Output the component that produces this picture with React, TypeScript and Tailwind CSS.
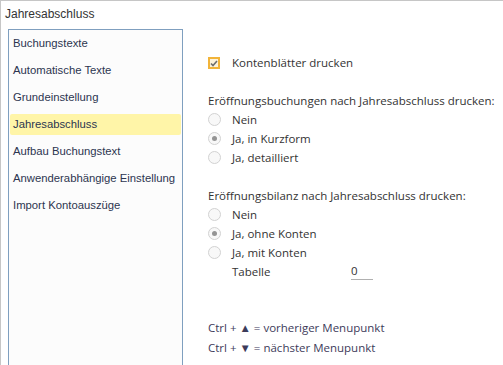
import React from "react";

const items = [
  "Buchungstexte",
  "Automatische Texte",
  "Grundeinstellung",
  "Jahresabschluss",
  "Aufbau Buchungstext",
  "Anwenderabhängige Einstellung",
  "Import Kontoauszüge",
];

function Radio({ label, checked }: { label: string; checked?: boolean }) {
  return (
    <div className="flex items-center h-[19px]">
      <span className="w-[13px] h-[13px] rounded-full border border-[#d2d2d2] bg-[#f8f8f8] flex items-center justify-center">
        {checked && <span className="w-[5px] h-[5px] rounded-full bg-[#949494]" />}
      </span>
      <span className="ml-[11px]">{label}</span>
    </div>
  );
}

export default function App() {
  return (
    <div className="w-[503px] h-[365px] overflow-hidden bg-white border-t border-l border-[#c6c6c6] font-['Liberation_Sans',sans-serif] text-[12px] text-[#333]">
      <div className="pl-[4px] pt-[4px] h-[28px] text-[#333]">Jahresabschluss</div>
      <div className="flex">
        {/* menu list */}
        <div className="ml-[7px] w-[175px] h-[340px] border border-[#7f9fbf] bg-[#fcfcfc] px-[1px] text-[11.3px]">
          {items.map((it) => (
            <div key={it} className="h-[27px] flex items-center">
              <div
                className={
                  "w-full h-[21px] flex items-center pl-[3px] rounded-[2px] whitespace-nowrap text-[#2c3550] " +
                  (it === "Jahresabschluss" ? "bg-[#fff5a8]" : "")
                }
              >
                {it}
              </div>
            </div>
          ))}
        </div>

        {/* settings */}
        <div className="ml-[25px] pt-[24px] font-['Open_Sans',sans-serif] text-[11.5px] text-[#333]">
          <div className="flex items-center h-[20px]">
            <span className="w-[12px] h-[12px] border-2 border-[#f2b43a] bg-[#fdf3dc] flex items-center justify-center">
              <svg width="8" height="7" viewBox="0 0 8 7">
                <path d="M1 3.5 L3 5.5 L7 1" stroke="#6e6e6e" strokeWidth="1.6" fill="none" />
              </svg>
            </span>
            <span className="ml-[12px]">Kontenblätter drucken</span>
          </div>

          <div className="mt-[18px] h-[19px] flex items-center">Eröffnungsbuchungen nach Jahresabschluss drucken:</div>
          <Radio label="Nein" />
          <Radio label="Ja, in Kurzform" checked />
          <Radio label="Ja, detailliert" />

          <div className="mt-[19px] h-[19px] flex items-center">Eröffnungsbilanz nach Jahresabschluss drucken:</div>
          <Radio label="Nein" />
          <Radio label="Ja, ohne Konten" checked />
          <Radio label="Ja, mit Konten" />
          <div className="flex items-center h-[19px] pl-[24px]">
            <span className="w-[119px]">Tabelle</span>
            <span className="w-[22px] border-b border-[#b0b0b0] leading-[16px]">0</span>
          </div>

          <div className="mt-[37px] text-[#3d3b5a]">
            <div className="h-[20px] flex items-center">Ctrl + ▲ = vorheriger Menupunkt</div>
            <div className="h-[20px] flex items-center">Ctrl + ▼ = nächster Menupunkt</div>
          </div>
        </div>
      </div>
    </div>
  );
}
